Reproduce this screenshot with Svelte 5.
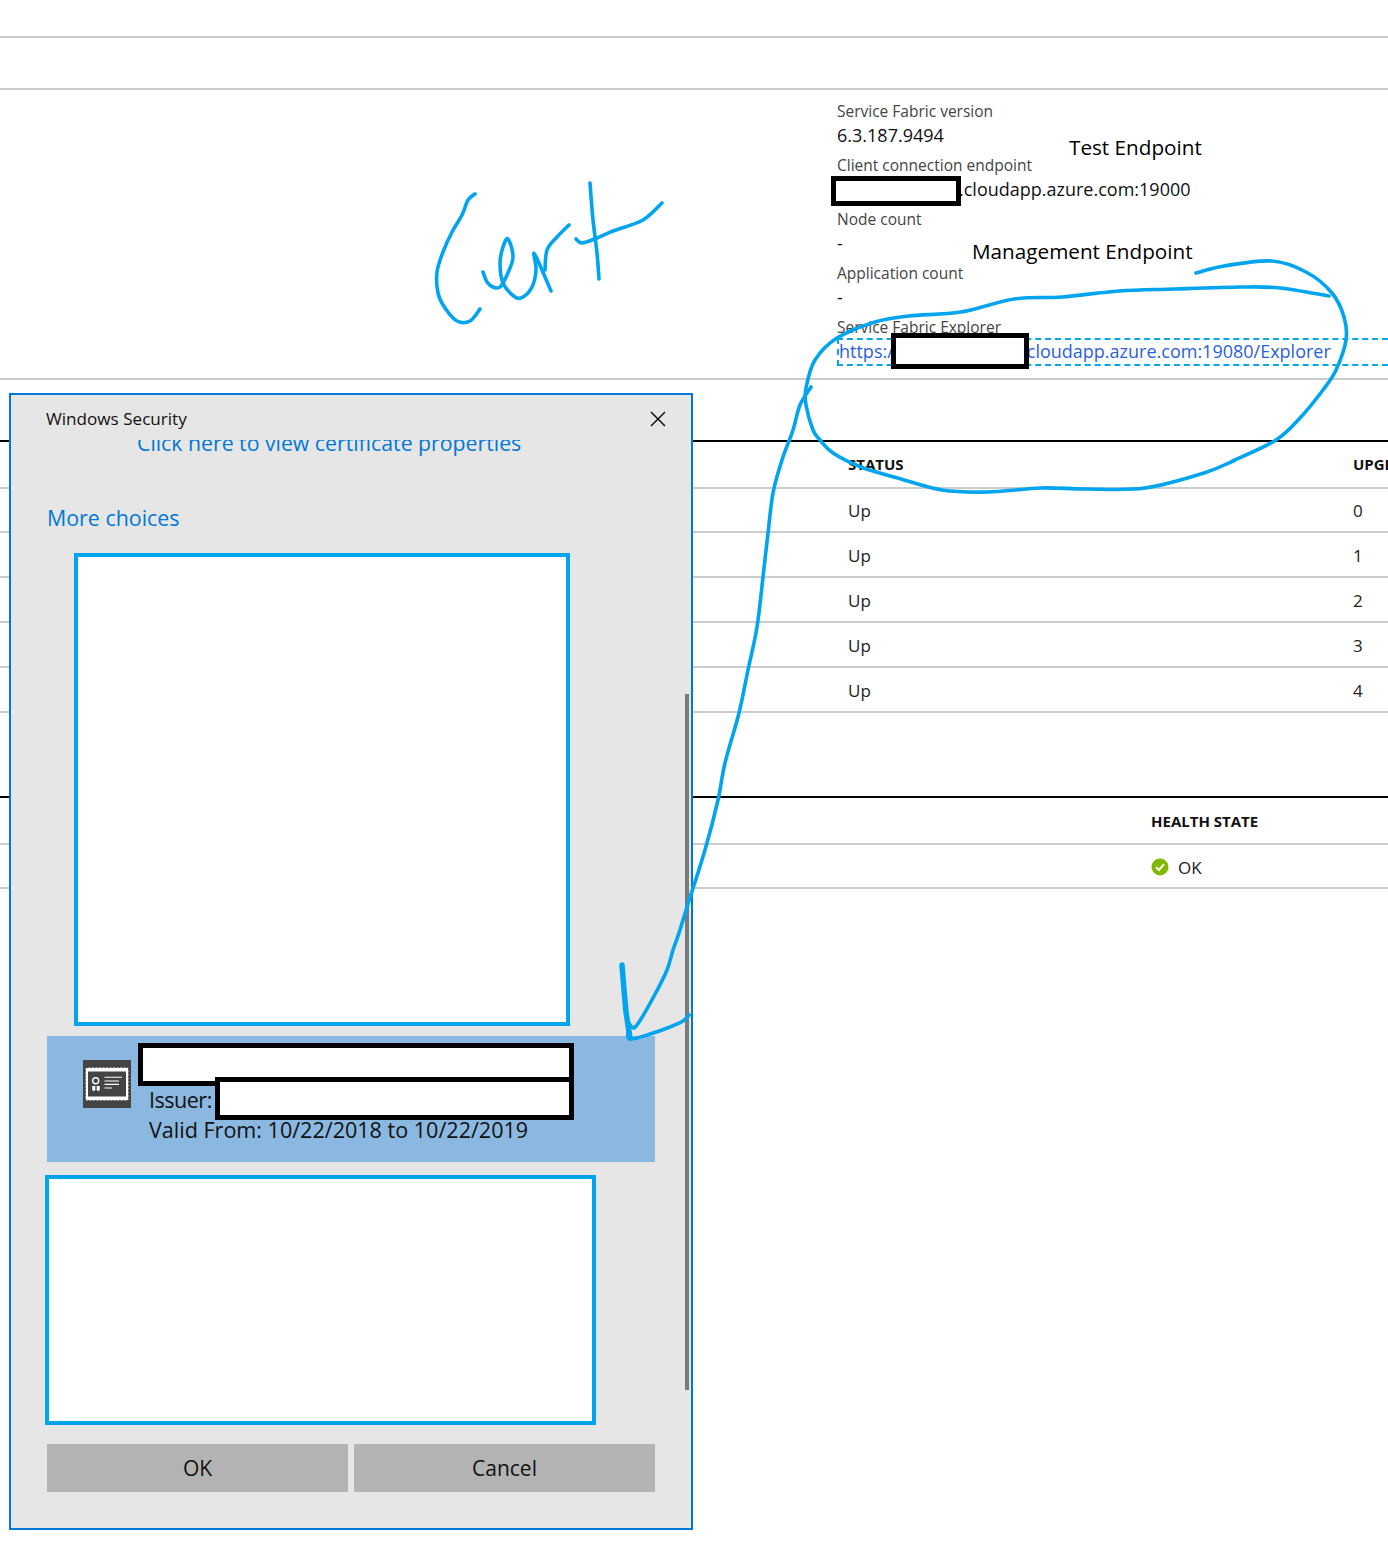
<script>
  const up = [0, 1, 2, 3, 4];

  function smooth(p) {
    let d = `M${p[0][0]} ${p[0][1]}`;
    for (let i = 0; i < p.length - 1; i++) {
      const a = p[Math.max(i - 1, 0)], b = p[i], c = p[i + 1], e = p[Math.min(i + 2, p.length - 1)];
      const c1 = [b[0] + (c[0] - a[0]) / 6, b[1] + (c[1] - a[1]) / 6];
      const c2 = [c[0] - (e[0] - b[0]) / 6, c[1] - (e[1] - b[1]) / 6];
      d += `C${c1[0].toFixed(1)} ${c1[1].toFixed(1)} ${c2[0].toFixed(1)} ${c2[1].toFixed(1)} ${c[0]} ${c[1]}`;
    }
    return d;
  }

  const strokes = [
    [[475,194],[468,200],[462,215],[452,232],[443,252],[437,272],[438,293],[445,308],[457,321],[470,321],[480,309]],
    [[483,272],[487,282],[493,287],[500,287],[507,275],[513,257],[508,239],[503,247],[500,263],[503,283],[515,297],[523,297],[532,287],[536,270],[534,253],[542,270],[551,291]],
    [[545,270],[547,250],[557,237],[569,225]],
    [[590,183],[593,220],[597,253],[599,279]],
    [[576,239],[582,243],[597,238],[613,231],[643,220],[662,203]],
    [[1196,273],[1224,266],[1272,261],[1306,272],[1332,293],[1344,317],[1346,340],[1336,370],[1323,390],[1300,418],[1276,440],[1235,460],[1204,473],[1145,488],[1086,489],[1041,488],[987,492],[942,490],[901,479],[861,467],[833,453],[820,440],[813,430],[806,405],[806,388],[815,360],[837,338],[875,322],[909,316],[961,312],[1014,299],[1062,297],[1119,291],[1175,289],[1242,287],[1280,288],[1329,296]],
    [[811,387],[800,405],[793,430],[782,460],[773,493],[768,533],[763,577],[757,627],[748,670],[739,713],[725,763],[718,800],[705,850],[687,907],[680,930],[673,950],[667,970],[653,998],[637,1025],[632,1027],[628,1022]],
    [[628,1030],[630,1039],[650,1034],[670,1027],[683,1021],[689,1015]]
  ];
</script>

<div class="page">
  <div class="strip first"></div>
  <div class="strip second"></div>

  <section class="details">
    <div class="label">Service Fabric version</div>
    <div class="value">6.3.187.9494</div>
    <div class="label">Client connection endpoint</div>
    <div class="value"><span class="gap client-gap"></span>.cloudapp.azure.com:19000</div>
    <div class="label">Node count</div>
    <div class="value">-</div>
    <div class="label">Application count</div>
    <div class="value">-</div>
    <div class="label">Service Fabric Explorer</div>
    <div class="value"><a class="explorer" href="#top">https:/<span class="gap url-gap"></span>cloudapp.azure.com:19080/Explorer</a></div>
  </section>

  <section class="table nodes">
    <div class="row head"><span>STATUS</span><span>UPGRADE DOMAIN</span></div>
    {#each up as n}
      <div class="row"><span>Up</span><span>{n}</span></div>
    {/each}
  </section>

  <section class="table apps">
    <div class="row head"><span>HEALTH STATE</span></div>
    <div class="row">
      <span class="health">
        <svg width="18" height="18" viewBox="0 0 18 18" aria-hidden="true">
          <circle cx="9" cy="9" r="8.5" fill="#7fba00" />
          <path d="M5 9.2 L8 12 L13 6.2" fill="none" stroke="#fff" stroke-width="2" />
        </svg>
        OK
      </span>
    </div>
  </section>

  <div class="note test">Test Endpoint</div>
  <div class="note mgmt">Management Endpoint</div>
  <div class="redact client"></div>
  <div class="redact url"></div>

  <div class="dialog">
    <header class="title">
      <span>Windows Security</span>
      <svg width="16" height="16" viewBox="0 0 16 16" aria-hidden="true">
        <path d="M1 1 L15 15 M15 1 L1 15" stroke="#111" stroke-width="1.5" fill="none" />
      </svg>
    </header>
    <div class="scroll">
      <a class="props" href="#top">Click here to view certificate properties</a>
      <a class="more" href="#top">More choices</a>
      <div class="blank upper"></div>
      <div class="cert">
        <svg class="cert-icon" width="48" height="48" viewBox="0 0 48 48" aria-hidden="true">
          <rect width="48" height="48" fill="#444" />
          <rect x="2.5" y="7.5" width="43" height="33" rx="1.5" fill="#fff" />
          <rect x="2.5" y="7.5" width="43" height="33" rx="1.5" fill="none" stroke="#444" stroke-width="1" stroke-dasharray="1.5 2" />
          <rect x="5" y="11.5" width="38" height="25" fill="#444" />
          <circle cx="12.7" cy="20.7" r="3" fill="none" stroke="#fff" stroke-width="1.4" />
          <path d="M9.3 26h3v4l-1.5 1.2 -1.5-1.2zM13.7 26h3v4l-1.5 1.2 -1.5-1.2z" fill="#fff" />
          <path d="M21.5 17.3H39M21.5 21H36M21.5 24.4H36M21.5 28H29" stroke="#fff" stroke-width="1.1" fill="none" />
        </svg>
        <div class="cert-text">
          <div>&nbsp;</div>
          <div class="issuer-line">Issuer:</div>
          <div>Valid From: 10/22/2018 to 10/22/2019</div>
        </div>
        <div class="redact subject"></div>
        <div class="redact issuer"></div>
      </div>
      <div class="blank lower"></div>
      <div class="buttons">
        <button>OK</button>
        <button>Cancel</button>
      </div>
    </div>
    <div class="scrollbar"></div>
  </div>

  <svg class="ink" width="1388" height="1556" viewBox="0 0 1388 1556" aria-hidden="true">
    {#each strokes as s}
      <path d={smooth(s)} />
    {/each}
    <path class="heavy" d="M622 965 L624 990 L626 1012 L630 1038" />
  </svg>
</div>

<style>
  :global(body) {
    margin: 0;
    background: #fff;
  }
  .page {
    position: relative;
    width: 1388px;
    height: 1556px;
    overflow: hidden;
    font-family: "Open Sans", "Noto Sans", sans-serif;
    color: #111;
    background: #fff;
  }
  .strip {
    box-sizing: border-box;
    border-bottom: 2px solid #ccc;
  }
  .first { height: 38px; }
  .second { height: 52px; }

  .details {
    box-sizing: border-box;
    height: 290px;
    padding: 9px 0 0 837px;
    border-bottom: 2px solid #ccc;
  }
  .label {
    height: 24px;
    line-height: 24px;
    font-size: 15.5px;
    color: #444;
    white-space: nowrap;
  }
  .value {
    height: 30px;
    line-height: 24px;
    font-size: 18px;
    color: #111;
    white-space: nowrap;
  }
  .gap { display: inline-block; }
  .client-gap { width: 122px; }
  .url-gap { width: 133px; }
  .explorer {
    display: block;
    box-sizing: border-box;
    height: 28px;
    margin-top: -1px;
    line-height: 22px;
    border: 2px dashed #00a8e8;
    border-right: 0;
    color: #2b5fd9;
    text-decoration: none;
  }

  .table { box-sizing: border-box; }
  .nodes { margin-top: 60px; border-top: 2px solid #000; }
  .apps { margin-top: 83px; border-top: 2px solid #000; }
  .row {
    box-sizing: border-box;
    display: grid;
    grid-template-columns: 505px 1fr;
    align-items: center;
    height: 45px;
    padding: 2px 0 0 848px;
    border-bottom: 2px solid #ccc;
    font-size: 17px;
    color: #222;
    white-space: nowrap;
  }
  .head {
    height: 47px;
    padding-top: 0;
    padding-bottom: 2px;
    font-size: 15px;
    font-weight: 700;
    color: #111;
  }
  .nodes .head + .row { height: 44px; padding-top: 1px; }
  .apps .row { padding-left: 1151px; height: 44px; }
  .apps .head { height: 47px; padding-bottom: 0; }
  .health {
    display: flex;
    align-items: center;
    gap: 9px;
  }

  .note {
    position: absolute;
    font-size: 20.7px;
    line-height: 28px;
    color: #000;
    white-space: nowrap;
  }
  .test { left: 1069px; top: 133px; }
  .mgmt { left: 972px; top: 237px; }

  .redact {
    position: absolute;
    box-sizing: border-box;
    border: 5px solid #000;
    background: #fff;
  }
  .client { left: 831px; top: 176px; width: 130px; height: 30px; }
  .url { left: 891px; top: 333px; width: 138px; height: 36px; }
  .subject { left: 91px; top: 7px; width: 436px; height: 43px; }
  .issuer { left: 168px; top: 41px; width: 359px; height: 43px; }

  .dialog {
    position: absolute;
    left: 9px;
    top: 393px;
    width: 684px;
    height: 1137px;
    box-sizing: border-box;
    border: 2px solid #0078d7;
    background: #e6e6e6;
    overflow: hidden;
  }
  .title {
    height: 45px;
    box-sizing: border-box;
    display: flex;
    align-items: center;
    justify-content: space-between;
    padding: 2px 25px 0 35px;
    font-size: 17.1px;
    color: #111;
    background: #e6e6e6;
  }
  .scroll {
    display: flex;
    flex-direction: column;
    align-items: flex-start;
    height: 1090px;
    padding-left: 36px;
    overflow: hidden;
  }
  .props {
    margin: -12px 0 0 90px;
    font-size: 21.25px;
    line-height: 30px;
    color: #0078d7;
    text-decoration: none;
    white-space: nowrap;
  }
  .more {
    margin: 45px 0 0 0;
    font-size: 21.4px;
    line-height: 30px;
    color: #0078d7;
    text-decoration: none;
  }
  .blank {
    box-sizing: border-box;
    background: #fff;
    border: 4px solid #00a4ef;
  }
  .upper {
    width: 496px;
    height: 473px;
    margin: 20px 0 0 27px;
  }
  .cert {
    position: relative;
    box-sizing: border-box;
    display: flex;
    align-items: flex-start;
    gap: 18px;
    width: 608px;
    height: 126px;
    margin-top: 10px;
    padding: 19px 0 0 36px;
    background: #8ab8e0;
  }
  .cert-icon { margin-top: 5px; flex: none; }
  .cert-text {
    font-size: 21.55px;
    line-height: 30px;
    color: #111;
    white-space: nowrap;
  }
  .issuer-line { letter-spacing: -0.5px; }
  .lower {
    width: 551px;
    height: 250px;
    margin: 13px 0 0 -2px;
  }
  .buttons {
    display: flex;
    gap: 6px;
    margin-top: 19px;
  }
  button {
    width: 301px;
    height: 48px;
    border: 0;
    padding: 0;
    background: #b3b3b3;
    font: inherit;
    font-size: 21px;
    color: #111;
  }
  .scrollbar {
    position: absolute;
    left: 674px;
    top: 299px;
    width: 4px;
    height: 696px;
    background: #7a7a7a;
  }

  .ink {
    position: absolute;
    left: 0;
    top: 0;
    pointer-events: none;
  }
  .ink path {
    fill: none;
    stroke: #00a4ef;
    stroke-width: 3.6;
    stroke-linecap: round;
    stroke-linejoin: round;
  }
  .ink path.heavy { stroke-width: 5.5; }
</style>
